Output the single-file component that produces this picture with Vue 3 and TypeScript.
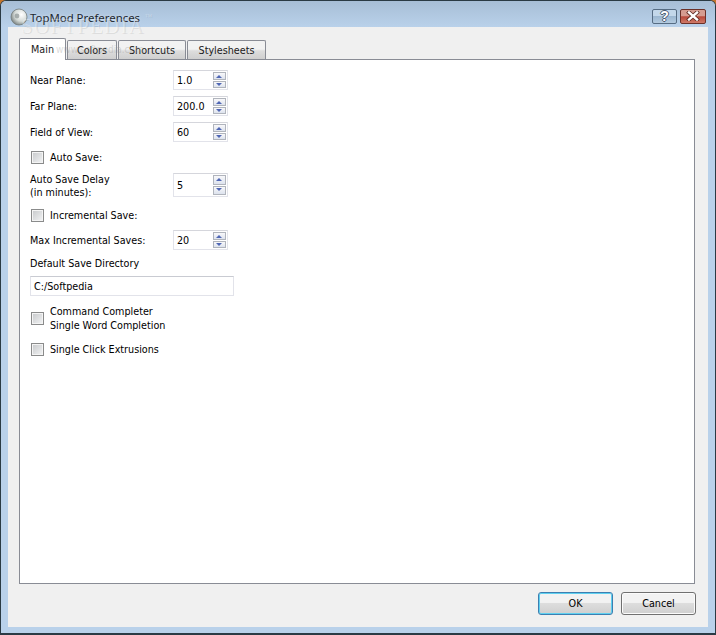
<script setup lang="ts">
const tabs = ['Main', 'Colors', 'Shortcuts', 'Stylesheets']
</script>

<template>
  <div class="window">
    <div class="titlebar">
      <svg class="appicon" width="18" height="18" viewBox="0 0 18 18">
        <defs>
          <radialGradient id="ball" cx="0.65" cy="0.35" r="0.75">
            <stop offset="0" stop-color="#ffffff" />
            <stop offset="0.55" stop-color="#d5dbd8" />
            <stop offset="1" stop-color="#6e7675" />
          </radialGradient>
        </defs>
        <circle cx="9" cy="9" r="8" fill="url(#ball)" stroke="#747c7c" stroke-width="0.8" />
        <circle cx="7" cy="8" r="2.4" fill="#8d9696" opacity="0.7" />
      </svg>
      <span class="title">TopMod Preferences</span>
      <span class="mark">SOFTPEDIA<sup>™</sup></span>
      <div class="caption">
        <button class="cap help"><span>?</span></button>
        <button class="cap close">
          <svg width="16" height="10" viewBox="0 0 16 10">
            <path d="M4 1.5 L12 8.5 M12 1.5 L4 8.5" stroke="#5d2a22" stroke-width="4" stroke-linecap="square" />
            <path d="M4 1.5 L12 8.5 M12 1.5 L4 8.5" stroke="#ffffff" stroke-width="2.4" stroke-linecap="square" />
          </svg>
        </button>
      </div>
    </div>
    <div class="client">
      <div class="tabs">
        <div v-for="(t, i) in tabs" :key="t" class="tab" :class="[{ active: i === 0 }, 'tab' + i]">{{ t }}</div>
        <span class="mark2">www.softpedia.com</span>
      </div>
      <div class="panel">
        <div class="form">
          <div class="row"><label>Near Plane:</label><div class="spin"><span>1.0</span><i class="arrows"><b class="up"></b><b class="down"></b></i></div></div>
          <div class="row r1"><label>Far Plane:</label><div class="spin"><span>200.0</span><i class="arrows"><b class="up"></b><b class="down"></b></i></div></div>
          <div class="row r1"><label>Field of View:</label><div class="spin"><span>60</span><i class="arrows"><b class="up"></b><b class="down"></b></i></div></div>
          <div class="check c0"><i class="box"></i><span>Auto Save:</span></div>
          <div class="row r2"><label>Auto Save Delay<br />(in minutes):</label><div class="spin tall"><span>5</span><i class="arrows"><b class="up"></b><b class="down"></b></i></div></div>
          <div class="check c1"><i class="box"></i><span>Incremental Save:</span></div>
          <div class="row r3"><label>Max Incremental Saves:</label><div class="spin"><span>20</span><i class="arrows"><b class="up"></b><b class="down"></b></i></div></div>
          <div class="plain">Default Save Directory</div>
          <div class="line">C:/Softpedia</div>
          <div class="check c2"><i class="box"></i><span>Command Completer<br />Single Word Completion</span></div>
          <div class="check c3"><i class="box"></i><span>Single Click Extrusions</span></div>
        </div>
      </div>
      <div class="actions">
        <button class="btn ok">OK</button>
        <button class="btn">Cancel</button>
      </div>
    </div>
  </div>
</template>

<style>
html, body {
  background: #c4752c;
}
</style>

<style scoped>
.window {
  position: relative;
  box-sizing: border-box;
  width: 716px;
  height: 635px;
  display: flex;
  flex-direction: column;
  overflow: hidden;
  border: 1px solid #2a3a44;
  border-bottom-width: 2px;
  border-radius: 6px 6px 0 0;
  background: #b9d1ea;
  font-family: "DejaVu Sans", "Noto Sans", sans-serif;
  font-stretch: condensed;
  font-size: 10.7px;
  color: #000;
}
.titlebar {
  height: 26px;
  flex: none;
  display: flex;
  align-items: center;
  position: relative;
  background: linear-gradient(#a7bed6, #b9d1ea);
}
.appicon {
  margin: 6px 0 0 9px;
}
.title {
  margin: 6px 0 0 2px;
  font-family: "Noto Sans", sans-serif;
  font-stretch: normal;
  font-size: 11.4px;
  color: #1c2730;
  text-shadow: 0 0 3px rgba(255, 255, 255, 0.5);
}
.mark {
  position: absolute;
  left: 20px;
  top: 13px;
  font-family: "Liberation Serif", serif;
  font-stretch: normal;
  font-size: 21px;
  line-height: 24px;
  letter-spacing: 1.2px;
  color: rgba(255, 255, 255, 0.3);
  text-shadow: 1px 1px 0 rgba(90, 90, 90, 0.13);
  pointer-events: none;
}
.mark sup {
  font-size: 7px;
  vertical-align: 14px;
  line-height: 0;
  letter-spacing: 0;
}
.caption {
  margin-left: auto;
  margin-right: 9px;
  margin-top: 4px;
  display: flex;
  gap: 3px;
}
.cap {
  height: 15px;
  padding: 0;
  border: 1px solid #566c83;
  border-radius: 2px;
  display: flex;
  align-items: center;
  justify-content: center;
}
.help {
  width: 25px;
  background: linear-gradient(#c3d7ea 0 45%, #9cb7d1 50%, #b4cbe0);
  color: #fff;
  font: bold 14px/14px "Liberation Sans", sans-serif;
  text-shadow: 1px 0 0 #4a5a70, -1px 0 0 #4a5a70, 0 1px 0 #4a5a70, 0 -1px 0 #4a5a70;
}
.close {
  width: 26px;
  border-color: #6b3028;
  background: linear-gradient(#d59c90 0 45%, #b8483a 52%, #cf7a68);
}
.client {
  flex: 1;
  margin: 0 7px 6px;
  background: #f0f0f0;
  display: flex;
  flex-direction: column;
  padding: 11px 13px 12px 11px;
  min-height: 0;
}
.tabs {
  height: 22px;
  flex: none;
  display: flex;
  align-items: flex-end;
  position: relative;
  z-index: 1;
  gap: 1px;
}
.tab {
  box-sizing: border-box;
  height: 19px;
  margin-bottom: 1px;
  border: 1px solid #898c95;
  border-bottom: none;
  background: linear-gradient(#f2f2f2 0 45%, #dddddd 55%, #cfcfcf);
  border-radius: 2px 2px 0 0;
  text-align: center;
  line-height: 20px;
  color: #1a1a1a;
}
.tab0 { width: 47px; }
.tab1 { width: 50px; }
.tab2 { width: 68px; }
.tab3 { width: 79px; }
.tab.active {
  height: 22px;
  margin-bottom: 0;
  background: #fff;
  line-height: 22px;
}
.mark2 {
  position: absolute;
  left: 37px;
  top: 6px;
  font-size: 10px;
  color: rgba(150, 150, 150, 0.35);
  pointer-events: none;
}
.panel {
  flex: 1;
  box-sizing: border-box;
  border: 1px solid #898c95;
  margin-top: -1px;
  background: #fff;
  min-height: 0;
}
.form {
  box-sizing: border-box;
  width: 215px;
  padding: 10px 0 0 10px;
  display: flex;
  flex-direction: column;
}
.row {
  display: flex;
  align-items: center;
  justify-content: space-between;
  width: 198px;
}
.r1 { margin-top: 6px; }
.r2 {
  margin-top: 9px;
  height: 24px;
}
.r2 label {
  margin-top: 2px;
}
.r3 { margin-top: 8px; }
.row label {
  line-height: 13px;
}
.spin {
  box-sizing: border-box;
  width: 55px;
  height: 20px;
  border: 1px solid #e2e3ea;
  border-top-color: #d5d6dc;
  display: flex;
  align-items: center;
  justify-content: space-between;
  padding: 0 1px 0 3px;
  background: #fff;
}
.spin.tall {
  height: 24px;
}
.arrows {
  display: flex;
  flex-direction: column;
  gap: 1px;
  width: 13px;
  height: 16px;
}
.tall .arrows {
  height: 20px;
}
.arrows b {
  flex: 1;
  box-sizing: border-box;
  border: 1px solid #b0b4bc;
  background: linear-gradient(#f8f8fa, #dde3ee);
  position: relative;
}
.arrows b::after {
  content: "";
  position: absolute;
  left: 2px;
  width: 0;
  height: 0;
  border-left: 3.5px solid transparent;
  border-right: 3.5px solid transparent;
}
.up::after {
  top: 2px;
  border-bottom: 3px solid #4f66b4;
}
.down::after {
  top: 1px;
  border-top: 3px solid #4f66b4;
}
.check {
  display: flex;
  align-items: center;
  gap: 6px;
  line-height: 14px;
  margin-left: 1px;
}
.check span {
  margin-top: 1px;
  margin-bottom: -1px;
}
.c0 { margin-top: 8px; }
.c1 { margin-top: 11px; }
.c2 { margin-top: 8px; }
.c3 { margin-top: 10px; }
.box {
  box-sizing: border-box;
  flex: none;
  width: 13px;
  height: 13px;
  border: 1px solid #8a8b8b;
  background: linear-gradient(135deg, #c6c8ca, #f3f4f5);
  box-shadow: inset 0 0 0 1px #f4f4f4;
}
.plain {
  margin-top: 7px;
  line-height: 14px;
}
.line {
  box-sizing: border-box;
  margin-top: 5px;
  width: 204px;
  height: 20px;
  border: 1px solid #e2e3ea;
  border-top-color: #c9cbd2;
  padding-left: 3px;
  line-height: 20px;
  background: #fff;
}
.actions {
  flex: none;
  display: flex;
  justify-content: flex-end;
  gap: 8px;
  margin-top: 8px;
  margin-right: -1px;
}
.btn {
  box-sizing: border-box;
  width: 75px;
  height: 23px;
  padding: 0;
  border: 1px solid #707070;
  border-radius: 3px;
  background: linear-gradient(#f2f2f2 0 45%, #dddddd 50%, #cfcfcf);
  box-shadow: inset 0 0 0 1px #fbfbfb;
  font: inherit;
  color: #000;
}
.btn.ok {
  border-color: #3c7fb1;
  box-shadow: inset 0 0 0 1px #5fd0f0;
}
</style>
